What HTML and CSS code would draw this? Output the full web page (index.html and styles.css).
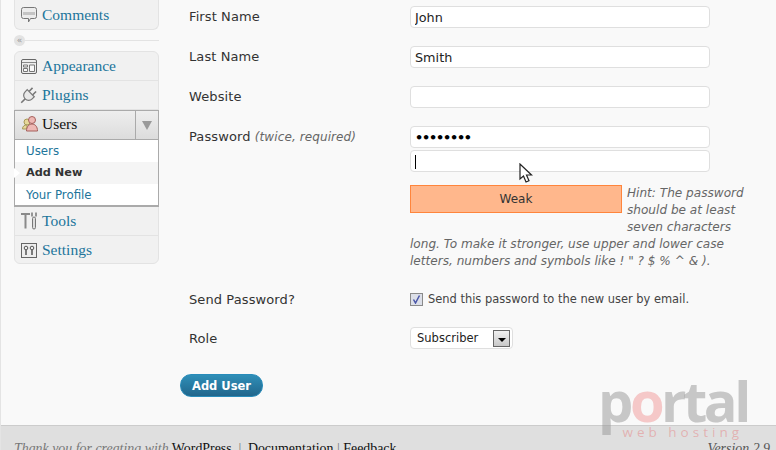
FILE: index.html
```html
<!DOCTYPE html>
<html lang="en">
<head>
    <meta charset="UTF-8">
    <title>Add New User</title>
    <link rel="stylesheet" href="styles.css">
</head>
<body>
    <div class="wrap">
        <div class="sidebar">
            <ul class="menu-group top-group">
                <li class="menu-item comments-item">
                    <svg class="menu-icon" width="18" height="18" viewBox="0 0 18 18"><path d="M3.500 1.500h11a2 2 0 0 1 2 2v7a2 2 0 0 1-2 2h-4l-2 3.500v-3.500h-5a2 2 0 0 1-2-2v-7a2 2 0 0 1 2-2z" fill="#ececec" stroke="#777"/><path d="M3 6h12v3H3z" fill="#c4c4c4"/></svg>
                    <a href="#">Comments</a>
                </li>
            </ul>
            <div class="collapse">
                <span class="collapse-btn">«</span>
                <span class="collapse-line"></span>
            </div>
            <ul class="menu-group">
                <li class="menu-item">
                    <svg class="menu-icon" width="18" height="18" viewBox="0 0 18 18"><rect x="1.500" y="2.500" width="15" height="14" rx="1.500" fill="#eee" stroke="#666"/><path d="M2 5.500h14" stroke="#888"/><path d="M3.500 8h4v2h-4zM3.500 11.500h4v3h-4zM9.500 8h5v6.500h-5z" fill="#f8f8f8" stroke="#777"/></svg>
                    <a href="#">Appearance</a>
                </li>
                <li class="menu-item">
                    <svg class="menu-icon" width="18" height="18" viewBox="0 0 18 18"><g transform="rotate(45 9 9)" stroke="#777" fill="#e8e8e8"><path d="M6.500 6.500V1.500M11.500 6.500V1.500" stroke-width="1.600"/><path d="M4 6.500h10v3a5 5 0 0 1-10 0z" stroke-width="1.200"/><path d="M9 14.500v5.500" stroke-width="1.500"/></g></svg>
                    <a href="#">Plugins</a>
                </li>
                <li class="menu-item users-item">
                    <svg class="menu-icon" width="18" height="18" viewBox="0 0 18 18"><circle cx="6" cy="7" r="3" fill="#e6d89a" stroke="#a89a58"/><path d="M1.500 14c0-3 2-4 4.500-4v4z" fill="#e6d89a" stroke="#a89a58"/><circle cx="11" cy="5" r="3.500" fill="#eeb8b4" stroke="#a5605c"/><path d="M5.500 16c0-4.500 2.500-7 5.500-7s5.500 2.500 5.500 7z" fill="#eeb8b4" stroke="#a5605c"/></svg>
                    <a href="#">Users</a>
                    <span class="menu-toggle"><span class="toggle-arrow"></span></span>
                </li>
                <li class="submenu">
                    <a href="#" class="sub-link">Users</a>
                    <a href="#" class="sub-link current">Add New</a>
                    <a href="#" class="sub-link">Your Profile</a>
                </li>
                <li class="menu-item tools-item">
                    <svg class="menu-icon" width="18" height="20" viewBox="0 0 18 20"><path d="M1 3h9M5.500 3.500v14" stroke="#8a8a8a" stroke-width="2" fill="none"/><path d="M12 1.500v4M16 1.500v4" stroke="#777" stroke-width="1.500"/><rect x="12.500" y="6" width="3" height="12" rx="1.500" fill="#ddd" stroke="#777"/></svg>
                    <a href="#">Tools</a>
                </li>
                <li class="menu-item last-item">
                    <svg class="menu-icon" width="18" height="18" viewBox="0 0 18 18"><rect x="1.500" y="2.500" width="15" height="14" fill="#eee" stroke="#666"/><circle cx="6" cy="7" r="1.800" fill="none" stroke="#555"/><path d="M6 9v5" stroke="#555" stroke-width="1.500"/><circle cx="12" cy="7" r="1.800" fill="none" stroke="#555"/><path d="M12 9v5" stroke="#555" stroke-width="1.500"/></svg>
                    <a href="#">Settings</a>
                </li>
            </ul>
        </div>

        <form class="user-form">
            <div class="form-row">
                <label class="form-label">First Name</label>
                <input class="text-input" type="text" value="John">
            </div>
            <div class="form-row">
                <label class="form-label">Last Name</label>
                <input class="text-input" type="text" value="Smith">
            </div>
            <div class="form-row">
                <label class="form-label">Website</label>
                <input class="text-input" type="text" value="">
            </div>
            <div class="form-row password-row">
                <label class="form-label">Password <em>(twice, required)</em></label>
                <div>
                    <div class="text-input pass-dots">••••••••</div>
                    <div class="text-input second-pass"><span class="caret"></span></div>
                    <div class="hint-box">
                        <div class="strength">Weak</div>
                        <p class="hint">Hint: The password should be at least seven characters long. To make it stronger, use upper and lower case letters, numbers and symbols like ! " ? $ % ^ &amp; ).</p>
                    </div>
                </div>
            </div>
            <div class="form-row send-row">
                <label class="form-label">Send Password?</label>
                <div class="check-line">
                    <span class="check-box">
                        <svg width="9" height="9" viewBox="0 0 9 9"><path d="M1.500 4.500l2 3.500 4-7.500" fill="none" stroke="#4a56a8" stroke-width="1.500"/></svg>
                    </span>
                    Send this password to the new user by email.
                </div>
            </div>
            <div class="form-row role-row">
                <label class="form-label">Role</label>
                <div class="select-box">
                    Subscriber
                    <span class="select-btn"><span class="select-arrow"></span></span>
                </div>
            </div>
            <button type="button" class="add-btn">Add User</button>
        </form>
    </div>

    <div class="footer">
        <p><em>Thank you for creating with</em> <a href="#">WordPress</a>. | <a href="#" class="doc-link">Documentation</a> | <a href="#">Feedback</a></p>
        <p class="version"><em>Version 2.9</em></p>
    </div>

    <!-- mouse pointer and watermark sit on top of the page -->
    <svg class="pointer" width="14" height="21" viewBox="0 0 14 21"><path d="M1 1v15l3.500-3 2.500 6 3-1.300-2.500-5.700h5z" fill="#fff" stroke="#222" stroke-width="1.200"/></svg>
    <div class="watermark">
        <div class="wm-portal"><span>p</span><span class="wm-o">o</span><span>rtal</span></div>
        <div class="wm-sub">web hosting</div>
    </div>
</body>
</html>
```
FILE: styles.css
```css
* {
    box-sizing: border-box;
    margin: 0;
    padding: 0;
}

html, body {
    height: 450px;
    overflow: hidden;
}

body {
    font-family: "DejaVu Sans", sans-serif;
    font-size: 12px;
    color: #333;
    background-color: #f9f9f9;
    border-left: 1px solid #e4e4e4;
}

.wrap {
    display: flex;
    height: 425px;
}

/* left menu */
.sidebar {
    width: 145px;
    margin-left: 13px;
    flex-shrink: 0;
}

.menu-group {
    list-style: none;
    background: #f1f1f1;
    border: 1px solid #e3e3e3;
    border-radius: 6px;
}

.top-group {
    height: 30px;
    border-top: none;
    border-radius: 0 0 6px 6px;
}

.menu-item {
    display: flex;
    align-items: center;
    height: 29px;
    padding-left: 5px;
    gap: 4px;
    border-bottom: 1px solid #e3e3e3;
    font-family: "Liberation Serif", serif;
    font-size: 15.500px;
}

.menu-item a {
    color: #21759b;
    text-decoration: none;
}

.menu-icon {
    flex-shrink: 0;
}

.comments-item {
    height: 29px;
    border-bottom: none;
}

.last-item {
    height: 27px;
    border-bottom: none;
}

.users-item {
    position: relative;
    margin: 0 -1px;
    padding-left: 6px;
    padding-bottom: 2px;
    gap: 3px;
    height: 29px;
    background: linear-gradient(#eeeeee, #dcdcdc);
    border: 1px solid #aaa;
    border-bottom: none;
}

.users-item a {
    color: #111;
}

.menu-toggle {
    position: absolute;
    right: 0;
    top: 0;
    bottom: 0;
    width: 23px;
    border-left: 1px solid #aaa;
    display: flex;
    align-items: center;
    justify-content: center;
}

.toggle-arrow {
    border-left: 5px solid transparent;
    border-right: 5px solid transparent;
    border-top: 9px solid #999;
}

.submenu {
    display: flex;
    flex-direction: column;
    margin: 0 -1px;
    height: 68px;
    background: #fff;
    border: 1px solid #aaa;
    border-bottom-width: 2px;
    font-size: 11.800px;
}

.sub-link {
    position: relative;
    height: 22px;
    line-height: 22px;
    padding-left: 11px;
    color: #21759b;
    text-decoration: none;
}

.sub-link.current {
    background: #f5f5f5;
    color: #333;
    font-size: 11.300px;
    font-weight: bold;
}

.sub-link.current::before {
    content: "";
    position: absolute;
    left: -1px;
    top: 6px;
    border-top: 5px solid transparent;
    border-bottom: 5px solid transparent;
    border-left: 6px solid #fff;
}

.tools-item {
    height: 29px;
}

.collapse {
    display: flex;
    align-items: center;
    height: 21px;
}

.collapse-btn {
    width: 11px;
    height: 11px;
    border-radius: 50%;
    background: #e3e3e3;
    color: #999;
    font-size: 9px;
    line-height: 10px;
    text-align: center;
}

.collapse-line {
    flex: 1;
    border-top: 1px solid #e3e3e3;
}

/* form */
.user-form {
    flex: 1;
    padding: 6px 0 0 30px;
}

.form-row {
    display: grid;
    grid-template-columns: 221px 300px;
    align-items: start;
    margin-bottom: 18px;
}

.form-label {
    font-size: 13px;
    line-height: 22px;
    letter-spacing: 0.1px;
    color: #333;
}

.form-label em {
    font-size: 12px;
    color: #666;
}

.text-input {
    display: block;
    width: 300px;
    height: 22px;
    padding: 1px 4px 0;
    font-family: "DejaVu Sans", sans-serif;
    font-size: 12.800px;
    line-height: 19px;
    color: #222;
    background: #fff;
    border: 1px solid #dfdfdf;
    border-radius: 4px;
}

.pass-dots {
    font-weight: bold;
    letter-spacing: -1.200px;
    color: #000;
}

.second-pass {
    margin-top: 2px;
    display: flex;
    align-items: center;
}

.caret {
    width: 1px;
    height: 14px;
    background: #000;
}

.password-row {
    grid-template-columns: 221px 350px;
    margin-bottom: 0;
}

.hint-box {
    margin-top: 13px;
}

.strength {
    float: left;
    width: 212px;
    height: 28px;
    line-height: 27px;
    margin: 0 5px 14px 0;
    text-align: center;
    font-size: 12px;
    background: #ffb78c;
    border: 1px solid #ff853c;
}

.hint {
    font-size: 12.100px;
    font-style: italic;
    line-height: 17px;
    color: #666;
}

.send-row {
    margin-top: 19px;
    margin-bottom: 16px;
}

.check-line {
    display: flex;
    align-items: center;
    gap: 5px;
    height: 20px;
    font-size: 11.450px;
    color: #444;
}

.check-box {
    display: flex;
    align-items: center;
    justify-content: center;
    width: 13px;
    height: 13px;
    background: #dcdfe8;
    border: 1px solid #8a8a8a;
}

.role-row {
    margin-bottom: 23px;
}

.role-row .form-label {
    line-height: 24px;
}

.select-box {
    display: flex;
    align-items: center;
    justify-content: space-between;
    width: 103px;
    height: 22px;
    padding: 0 2px 0 6px;
    font-size: 11.500px;
    color: #222;
    background: #fff;
    border: 1px solid #dfdfdf;
    border-radius: 4px;
}

.select-btn {
    display: flex;
    align-items: center;
    justify-content: center;
    width: 17px;
    height: 17px;
    background: linear-gradient(#f0f0f0, #c8c8c8);
    border: 1px solid #666;
}

.select-arrow {
    margin-top: 3px;
    border-left: 4px solid transparent;
    border-right: 4px solid transparent;
    border-top: 4px solid #000;
}

.add-btn {
    display: block;
    width: 83px;
    height: 23px;
    margin-left: -9px;
    font-family: "DejaVu Sans", sans-serif;
    font-size: 11.500px;
    font-weight: bold;
    color: #fff;
    background: linear-gradient(#2f8fb8, #21668c);
    border: 1px solid #298cba;
    border-radius: 11px;
}

/* footer */
.footer {
    display: flex;
    justify-content: space-between;
    height: 25px;
    padding: 15px 6px 0 13px;
    font-family: "Liberation Serif", serif;
    font-size: 13.900px;
    line-height: 16px;
    color: #777;
    background: #dfdfdf;
    border-top: 1px solid #ccc;
}

.footer a {
    color: #111;
    text-decoration: none;
}

.doc-link {
    margin-left: 3px;
}

.version {
    color: #555;
}

/* overlays */
.pointer {
    position: absolute;
    left: 519px;
    top: 163px;
}

.watermark {
    position: absolute;
    left: 598px;
    top: 372px;
    width: 145px;
    text-align: right;
    font-family: "Open Sans", sans-serif;
    pointer-events: none;
}

.wm-portal {
    font-size: 56px;
    line-height: 56px;
    font-weight: bold;
    letter-spacing: -3.500px;
    white-space: nowrap;
    color: rgba(150, 150, 150, 0.5);
}

.wm-o {
    color: rgba(240, 140, 140, 0.45);
}

.wm-sub {
    font-size: 13.500px;
    line-height: 14px;
    letter-spacing: 4px;
    white-space: nowrap;
    margin-top: -3px;
    color: rgba(230, 120, 120, 0.45);
}
```
